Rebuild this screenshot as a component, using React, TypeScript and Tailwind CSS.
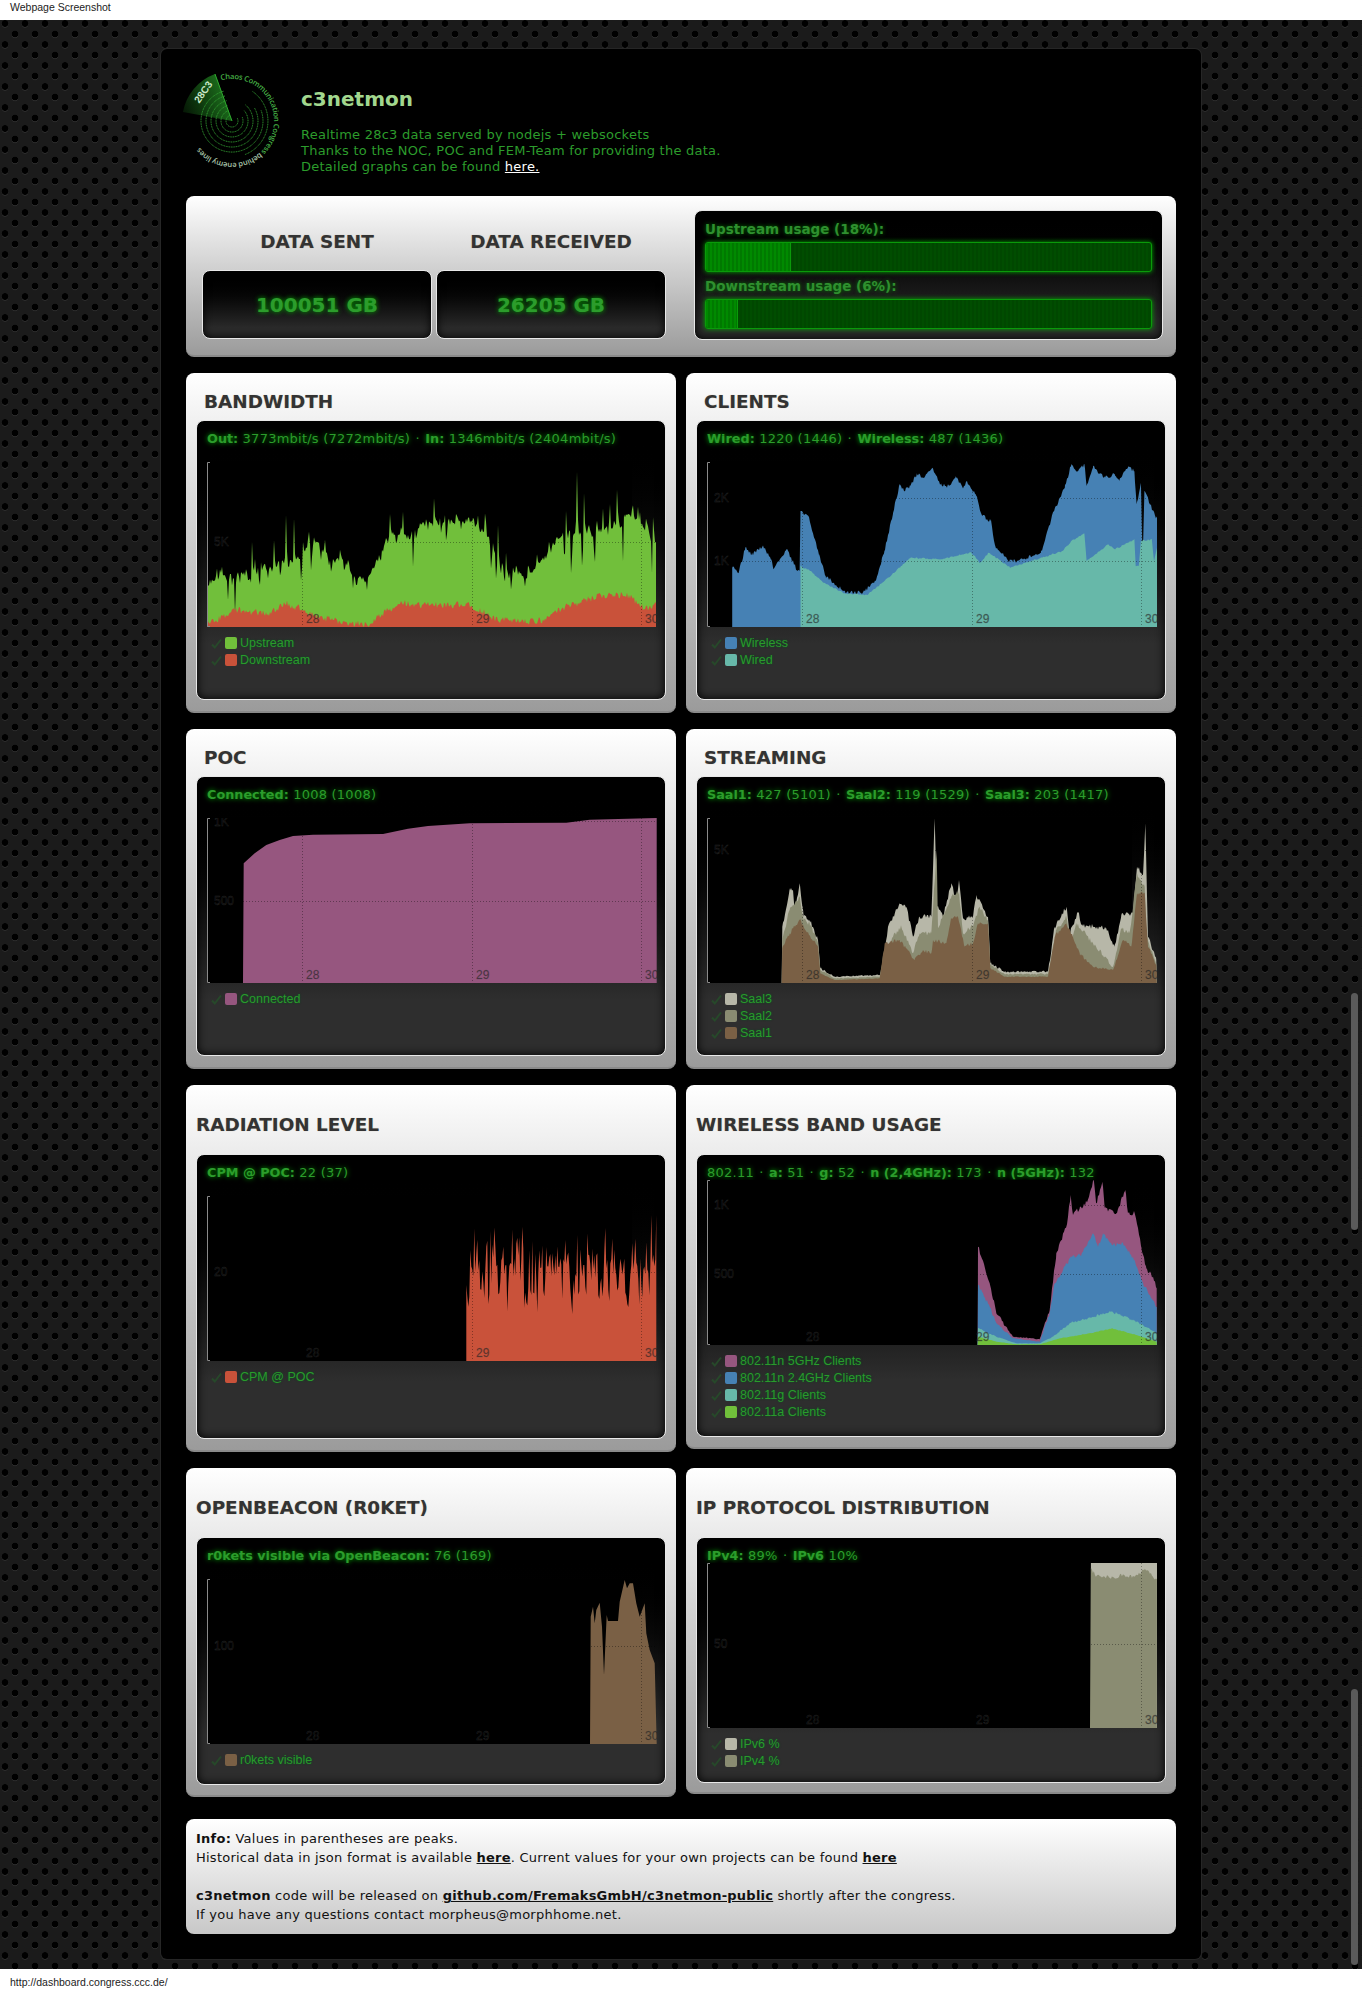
import React from "react";

type Pt = number[];
type Series = { color: string; pts: Pt[] };
type ChartProps = {
  series: Series[];
  yLabels: { text: string; y: number }[];
};

const W = 450;
const H = 165;

// maps coordinates read off the reference crops onto chart pixels
const trace = (pts: Pt[], x0: number, y0: number, sx = 3, sy = 3): Pt[] =>
  pts.map(([x, y]) => [(x - x0) / sx, (y - y0) / sy]);

const lerp = (env: Pt[], x: number) => {
  if (x <= env[0][0]) return env[0][1];
  for (let i = 1; i < env.length; i++) {
    if (x <= env[i][0]) {
      const [x1, y1] = env[i - 1];
      const [x2, y2] = env[i];
      return y1 + ((y2 - y1) * (x - x1)) / (x2 - x1 || 1);
    }
  }
  return env[env.length - 1][1];
};

const rng = (seed: number) => () => {
  seed = (seed * 16807) % 2147483647;
  return seed / 2147483647;
};

const spiky = (
  env: Pt[],
  ups: Pt[],
  downs: Pt[],
  noise: number,
  seed: number,
  hw = 1.6
): Pt[] => {
  const r = rng(seed);
  const out: Pt[] = [];
  const start = env[0][0];
  const end = env[env.length - 1][0];
  for (let x = start; x <= end; x += 1) {
    let y = lerp(env, x) + (r() - 0.5) * noise;
    ups.forEach(([sx, sy]) => {
      const d = Math.abs(x - sx);
      if (d < hw && sy < y) y = Math.min(y, sy + ((y - sy) * d) / hw);
    });
    downs.forEach(([sx, sy]) => {
      const d = Math.abs(x - sx);
      if (d < hw && sy > y) y = Math.max(y, sy - ((sy - y) * d) / hw);
    });
    out.push([x, y]);
  }
  return out;
};

// keeps the traced corners, adds jitter between them
const roughen = (pts: Pt[], noise: number, seed: number): Pt[] => {
  const r = rng(seed);
  const out: Pt[] = [];
  for (let i = 0; i < pts.length - 1; i++) {
    const [x1, y1] = pts[i];
    const [x2, y2] = pts[i + 1];
    out.push(pts[i]);
    for (let x = Math.floor(x1) + 1; x < x2; x += 1) {
      const low = Math.min(1, (H - (y1 + ((y2 - y1) * (x - x1)) / (x2 - x1))) / 30);
      out.push([x, y1 + ((y2 - y1) * (x - x1)) / (x2 - x1) + (r() - 0.5) * noise * low]);
    }
  }
  out.push(pts[pts.length - 1]);
  return out;
};

const GREEN = "#71bf3b";
const RED = "#c9523a";
const BLUE = "#4681b4";
const TEAL = "#67b8a9";
const PURPLE = "#96567f";
const BROWN = "#7a6045";
const OLIVE = "#8a8c72";
const STONE = "#b7b7a8";

/* ---------- chart data ---------- */

const bandwidthEnv = trace(
  [[112, 670], [200, 640], [300, 620], [390, 590], [430, 530], [480, 600], [520, 600], [560, 655], [600, 650], [640, 570], [660, 510], [720, 540], [760, 480], [820, 490], [900, 480], [940, 515], [1000, 620], [1070, 650], [1130, 590], [1180, 520], [1300, 510], [1380, 460], [1461, 545]],
  112,
  306
);

// short filler spikes between the tall ones traced by hand
const fillerSpikes = (env: Pt[], seed: number, every: number, reach: number) => {
  const r = rng(seed);
  const ups: Pt[] = [];
  const downs: Pt[] = [];
  for (let x = 1; x < W; x += every) {
    const y = lerp(env, x);
    if (r() > 0.5) ups.push([x + r(), y - r() * reach]);
    else downs.push([x + r(), y + r() * reach]);
  }
  return { ups, downs };
};

const bandwidthFill = fillerSpikes(bandwidthEnv, 19, 4, 14);

const bandwidthUp = spiky(
  bandwidthEnv,
  [
    ...trace(
      [[157, 620], [247, 545], [258, 545], [313, 540], [349, 465], [373, 475], [400, 545], [660, 445], [680, 450], [700, 455], [793, 415], [813, 425], [910, 430], [923, 425], [947, 435], [985, 495], [1007, 515], [1187, 365], [1222, 335], [1243, 400], [1300, 445], [1320, 405], [1342, 360], [1362, 420], [1388, 305], [1405, 440], [1430, 460], [1450, 415]],
      112,
      306
    ),
    ...bandwidthFill.ups,
  ],
  [
    ...trace(
      [[175, 720], [196, 760], [243, 690], [270, 700], [332, 665], [395, 690], [425, 665], [485, 650], [550, 685], [592, 690], [680, 570], [730, 620], [830, 560], [965, 650], [980, 680], [1005, 710], [1025, 710], [1185, 650], [1205, 690], [1238, 655], [1275, 640], [1360, 605], [1447, 640]],
      112,
      306
    ),
    ...bandwidthFill.downs,
  ],
  6,
  11,
  1.2
);

const bandwidthDown = spiky(
  trace(
    [[112, 795], [150, 775], [200, 750], [300, 760], [350, 730], [390, 745], [410, 760], [470, 775], [550, 790], [600, 790], [650, 755], [690, 725], [740, 735], [760, 735], [900, 735], [930, 750], [980, 780], [1060, 785], [1120, 780], [1150, 755], [1220, 730], [1300, 705], [1380, 705], [1420, 745], [1461, 735]],
    112,
    306
  ),
  [],
  [],
  7,
  23
);

const clientsWireless = roughen(
  trace(
    [[120, 1320], [120, 1150], [135, 1165], [150, 1090], [165, 1110], [190, 1085], [210, 1125], [215, 1155], [245, 1095], [270, 1160], [275, 1160], [277, 980], [295, 995], [320, 1110], [335, 1175], [380, 1225], [420, 1225], [450, 1190], [470, 1100], [490, 985], [505, 900], [515, 920], [530, 905], [545, 870], [560, 880], [580, 850], [600, 900], [615, 905], [635, 880], [650, 910], [660, 890], [680, 930], [695, 995], [715, 1010], [725, 1085], [755, 1130], [775, 1130], [830, 1105], [860, 980], [885, 910], [900, 840], [915, 860], [930, 840], [935, 905], [950, 845], [975, 880], [1000, 870], [1010, 890], [1030, 850], [1045, 860], [1050, 960], [1060, 895], [1064, 1140], [1068, 920], [1095, 1000], [1097, 1000]],
    62,
    833,
    2.3
  ),
  4,
  31
);

const clientsWired = roughen(
  trace(
    [[277, 1320], [277, 1145], [300, 1160], [330, 1195], [380, 1228], [430, 1232], [470, 1190], [530, 1120], [600, 1125], [670, 1105], [690, 1135], [710, 1105], [760, 1150], [880, 1100], [900, 1070], [930, 1048], [935, 1130], [985, 1080], [1000, 1095], [1045, 1065], [1048, 1145], [1055, 1145], [1060, 1070], [1085, 1065], [1090, 1130], [1097, 1090]],
    62,
    833,
    2.3
  ),
  1.5,
  37
);

const pocConnected = trace(
  [[220, 788], [222, 430], [255, 400], [290, 375], [330, 360], [370, 348], [430, 344], [640, 342], [715, 326], [775, 318], [900, 310], [1190, 308], [1260, 299], [1461, 294]],
  112,
  294
);

const saal3 = roughen(
  trace(
    [[306, 788], [308, 620], [330, 505], [340, 510], [345, 580], [360, 490], [372, 590], [390, 600], [415, 660], [422, 745], [465, 770], [600, 765], [610, 740], [625, 620], [660, 550], [680, 560], [700, 650], [720, 590], [755, 590], [765, 295], [772, 560], [790, 590], [815, 490], [830, 540], [838, 480], [850, 595], [880, 590], [890, 525], [925, 590], [932, 730], [975, 755], [1105, 755], [1125, 620], [1160, 560], [1170, 640], [1195, 575], [1205, 615], [1280, 625], [1305, 680], [1325, 585], [1360, 580], [1372, 440], [1390, 465], [1397, 310], [1405, 650], [1430, 720], [1431, 788]],
    82,
    294
  ),
  5,
  41
);

const saal2 = roughen(
  trace(
    [[306, 788], [308, 655], [330, 570], [360, 530], [372, 600], [390, 610], [415, 670], [422, 750], [465, 775], [600, 770], [612, 700], [640, 650], [665, 620], [700, 700], [720, 640], [755, 640], [771, 390], [775, 625], [815, 530], [838, 515], [850, 640], [880, 620], [900, 560], [925, 600], [932, 735], [975, 762], [1105, 762], [1130, 630], [1160, 590], [1175, 670], [1190, 610], [1240, 670], [1300, 740], [1325, 625], [1350, 640], [1372, 460], [1395, 500], [1400, 650], [1430, 730], [1431, 788]],
    82,
    294
  ),
  5,
  43
);

const saal1 = roughen(
  trace(
    [[306, 788], [308, 685], [330, 640], [360, 600], [372, 620], [415, 680], [422, 760], [465, 780], [600, 775], [615, 670], [660, 660], [705, 720], [730, 690], [755, 700], [760, 660], [800, 670], [815, 595], [835, 590], [855, 680], [880, 670], [895, 610], [925, 610], [932, 745], [975, 770], [1105, 770], [1125, 650], [1160, 610], [1200, 700], [1240, 740], [1300, 750], [1330, 660], [1355, 680], [1372, 520], [1395, 520], [1405, 680], [1430, 735], [1431, 788]],
    82,
    294
  ),
  4,
  47
);

const radiationSpikes = () => {
  const r = rng(77);
  const ups: Pt[] = [];
  const downs: Pt[] = [];
  for (let x = 892; x < 1461; x += 5) {
    if (r() > 0.35) ups.push([x + r() * 3, 430 + r() * 130]);
    else downs.push([x + r() * 3, 640 + r() * 70]);
  }
  ups.push([1063, 355], [1445, 405], [1460, 405]);
  return { ups, downs };
};

const { ups: radUps, downs: radDowns } = radiationSpikes();

const radiation = [
  [(890 - 112) / 3, H],
  ...spiky(
    trace([[890, 625], [1100, 615], [1300, 605], [1461, 620]], 112, 348),
    trace(radUps, 112, 348),
    trace(radDowns, 112, 348),
    16,
    5,
    1.1
  ),
];

const wireless5 = roughen(
  trace(
    [[894, 795], [895, 500], [930, 610], [950, 700], [1000, 770], [1080, 778], [1110, 690], [1130, 520], [1160, 440], [1173, 345], [1180, 405], [1200, 385], [1215, 375], [1228, 350], [1242, 300], [1250, 370], [1268, 305], [1275, 385], [1310, 400], [1337, 330], [1345, 400], [1365, 400], [1385, 500], [1400, 565], [1420, 590], [1431, 625], [1431, 795]],
    82,
    300
  ),
  5,
  51
);
const wireless24 = roughen(
  trace(
    [[894, 795], [895, 615], [930, 680], [950, 730], [1000, 775], [1080, 785], [1110, 700], [1125, 610], [1175, 530], [1205, 525], [1240, 460], [1255, 500], [1270, 460], [1300, 495], [1330, 490], [1365, 540], [1390, 610], [1431, 680], [1431, 795]],
    82,
    300
  ),
  4,
  53
);
const wirelessG = roughen(
  trace(
    [[894, 795], [895, 745], [950, 770], [1010, 790], [1080, 790], [1120, 770], [1170, 730], [1240, 710], [1298, 695], [1370, 725], [1431, 760], [1431, 795]],
    82,
    300
  ),
  3,
  57
);
const wirelessA = roughen(
  trace(
    [[894, 795], [895, 770], [950, 785], [1010, 793], [1080, 793], [1140, 775], [1230, 760], [1298, 745], [1370, 765], [1431, 785], [1431, 795]],
    82,
    300
  ),
  2,
  59
);

const beacon = trace(
  [[1261, 851], [1263, 470], [1270, 440], [1275, 490], [1280, 450], [1290, 428], [1297, 500], [1303, 645], [1311, 465], [1315, 483], [1345, 483], [1350, 425], [1365, 360], [1372, 385], [1380, 370], [1390, 370], [1400, 430], [1410, 470], [1425, 430], [1430, 520], [1440, 570], [1455, 610], [1461, 851]],
  112,
  357
);

const ipv6 = trace([[945, 793], [945, 305], [1097, 305], [1097, 793]], 62, 305, 2.3);
const ipv4 = [
  [(943 - 62) / 2.3, H],
  ...spiky(
    trace([[945, 325], [960, 345], [1000, 350], [1015, 340], [1040, 345], [1070, 325], [1097, 355]], 62, 305, 2.3),
    [],
    [],
    4,
    9
  ),
];

/* ---------- shared pieces ---------- */

const toPath = (pts: Pt[]) => {
  const body = pts.map(([x, y]) => `L${x.toFixed(1)} ${y.toFixed(1)}`).join(" ");
  const first = pts[0][0].toFixed(1);
  const last = pts[pts.length - 1][0].toFixed(1);
  return `M${first} ${H} ${body} L${last} ${H} Z`;
};

const DAYS = [
  { text: "28", line: 95, x: 99 },
  { text: "29", line: 265, x: 269 },
  { text: "30", line: 434, x: 438 },
];

function Chart({ series, yLabels }: ChartProps) {
  const labelProps = {
    fill: "#000",
    fillOpacity: 0.5,
    stroke: "#4a4a4a",
    strokeOpacity: 0.55,
    strokeWidth: 0.4,
    fontSize: 12,
    fontFamily: "'Liberation Sans', sans-serif",
  };
  return (
    <svg width={W} height={H} viewBox={`0 0 ${W} ${H}`} className="block ml-[10px]">
      <rect x="0" y="0" width="425" height={H} fill="#000" />
      {series.map((s) => (
        <path key={s.color} d={toPath(s.pts)} fill={s.color} />
      ))}
      {DAYS.map((d) => (
        <line key={d.line} x1={d.line + 0.5} x2={d.line + 0.5} y1="0" y2={H} stroke="#000" strokeOpacity="0.35" strokeDasharray="1 2" />
      ))}
      {yLabels.map((l) => (
        <line key={l.text} x1="0" x2={W} y1={l.y + 0.5} y2={l.y + 0.5} stroke="#000" strokeOpacity="0.35" strokeDasharray="1 2" />
      ))}
      <path d="M3 0.5H0.5V164.5H3" fill="none" stroke="#8a8a8a" />
      {DAYS.map((d) => (
        <text key={d.text} x={d.x} y="161" {...labelProps}>
          {d.text}
        </text>
      ))}
      {yLabels.map((l) => (
        <text key={l.text} x="7" y={Math.max(l.y + 4, 8)} {...labelProps}>
          {l.text}
        </text>
      ))}
    </svg>
  );
}

function Legend({ items }: { items: { color: string; label: string }[] }) {
  return (
    <div className="pt-[8px] pl-[14px] font-['Liberation_Sans',sans-serif] text-[12.5px] text-[#2b9a2b]">
      {items.map((item) => (
        <div key={item.label} className="flex h-[17px] items-center">
          <svg width="11" height="11" viewBox="0 0 11 11" className="mr-[3px]">
            <path d="M1 6.5 L3.8 9.5 L10 1.5" fill="none" stroke="#27482a" strokeWidth="2" />
          </svg>
          <span className="h-[12px] w-[12px] rounded-[2px] -mt-[2px]" style={{ backgroundColor: item.color }} />
          <span className="ml-[3px] leading-[17px] [text-shadow:0_0_2px_#052]">{item.label}</span>
        </div>
      ))}
    </div>
  );
}

function Readout({ parts, tall }: { parts: [string, string][]; tall: boolean }) {
  return (
    <div className={`${tall ? "h-[41px]" : "h-[25px]"} pt-[9px] pl-[10px] text-[13px] tracking-[0.24px] leading-[18px] whitespace-nowrap text-[#2c9c2c] [text-shadow:0_0_5px_#0a0]`}>
      {parts.map(([label, value], i) => (
        <span key={label + value}>
          {i > 0 && <span className="mx-[1px]"> · </span>}
          {label && <b className="text-[12.8px] font-bold tracking-normal">{label}</b>} {value}
        </span>
      ))}
    </div>
  );
}

type CardProps = {
  title: string;
  big?: boolean;
  tall?: boolean;
  cardH: string;
  innerH: string;
  parts: [string, string][];
  chart: ChartProps;
  legend: { color: string; label: string }[];
};

function Card({ title, big, tall = true, cardH, innerH, parts, chart, legend }: CardProps) {
  return (
    <section className={`${cardH} w-[490px] rounded-lg border-b-2 border-[#8a8a8a] bg-gradient-to-b from-white to-[#9b9b9b]`}>
      <h2 className={`${big ? "h-[69px] pl-[10px]" : "h-[47px] pl-[18px]"} flex items-center pt-[10px] text-[18.4px] font-bold text-[#333] [text-shadow:0_0_1px_rgba(120,90,40,0.4)]`}>
        {title}
      </h2>
      <div className={`${innerH} mx-[10px] rounded-lg border border-[#e8e8e8] bg-gradient-to-b from-black from-[5%] to-[#2e2e2e] to-[80%] shadow-[inset_0_0_10px_#000]`}>
        <Readout parts={parts} tall={tall} />
        <Chart {...chart} />
        <Legend items={legend} />
      </div>
    </section>
  );
}

function Logo() {
  const arc = (r: number, a0: number, a1: number) => {
    const p = (a: number) => [55 + r * Math.sin((a * Math.PI) / 180), 55 - r * Math.cos((a * Math.PI) / 180)];
    const [x0, y0] = p(a0);
    const [x1, y1] = p(a1);
    return `M${x0.toFixed(1)} ${y0.toFixed(1)} A${r} ${r} 0 ${a1 - a0 > 180 ? 1 : 0} 1 ${x1.toFixed(1)} ${y1.toFixed(1)}`;
  };
  const rings: [number, number, number][] = [
    [6, 60, 340],
    [11, 70, 340],
    [16, 50, 345],
    [21, 40, 345],
    [26, 60, 345],
    [31, 70, 345],
    [36, 35, 160],
  ];
  return (
    <svg width="110" height="110" viewBox="0 0 110 110" className="shrink-0">
      <defs>
        <linearGradient id="sweep" x1="1" y1="0.3" x2="0" y2="0.7">
          <stop offset="0" stopColor="#1f7a1f" />
          <stop offset="1" stopColor="#061a06" />
        </linearGradient>
        <path id="ring" d="M44 14.4 A42 42 0 1 1 23 82" />
      </defs>
      <path d="M55 55 L38 8 A50 50 0 0 0 6 46 Z" fill="url(#sweep)" />
      <path d="M55 55 L38 8" stroke="#2fae2f" strokeWidth="1" />
      {rings.map(([r, a0, a1]) => (
        <path key={r} d={arc(r, a0, a1)} fill="none" stroke="#35a535" strokeWidth="1" strokeDasharray="1 0.7" />
      ))}
      <text x="29" y="28" transform="rotate(-55 29 28)" fontSize="10" fontWeight="bold" fill="#c8e8c8" fontFamily="'Liberation Sans', sans-serif" textAnchor="middle">
        28C3
      </text>
      <text fontSize="7.5" fontFamily="'Open Sans', sans-serif" fontWeight="600" fill="#45b045">
        <textPath href="#ring" textLength="180">
          Chaos Communication Congress <tspan fill="#a9c4a9">behind enemy lines</tspan>
        </textPath>
      </text>
    </svg>
  );
}

function UsageBar({ label, pct }: { label: string; pct: string }) {
  return (
    <div className="mb-[5px]">
      <div className="h-[19px] text-[13.5px] font-bold leading-[19px] text-[#2f8f2f] [text-shadow:0_0_4px_#070]">{label}</div>
      <div className="mt-[3px] h-[30px] overflow-hidden rounded-[3px] border border-[#0a9a0a] bg-[#004d00] shadow-[0_0_5px_#0a0] bg-[repeating-linear-gradient(90deg,transparent_0,transparent_2px,rgba(0,0,0,0.08)_2px,rgba(0,0,0,0.08)_4px)]">
        <div className="h-full border-r border-[#0a9a0a] bg-[#008a00] bg-[repeating-linear-gradient(90deg,transparent_0,transparent_2px,rgba(0,0,0,0.12)_2px,rgba(0,0,0,0.12)_4px)]" style={{ width: pct }} />
      </div>
    </div>
  );
}

function Total({ title, value }: { title: string; value: string }) {
  return (
    <div className="w-[230px]">
      <h2 className="flex h-[74px] items-center justify-center pt-[17px] text-[18.4px] font-bold text-[#333] [text-shadow:0_0_1px_rgba(120,90,40,0.4)]">{title}</h2>
      <div className="flex h-[69px] items-center justify-center rounded-lg border border-[#e8e8e8] bg-gradient-to-b from-black to-[#2a2a2a] to-[85%] text-[20px] font-bold text-[#2c9c2c] shadow-[inset_0_0_8px_#000] [text-shadow:0_0_5px_#0a0]">
        {value}
      </div>
    </div>
  );
}

const row1 = "flex gap-[10px]";

export default function App() {
  return (
    <div className="relative flex h-[1989px] w-[1362px] flex-col overflow-hidden bg-white font-['DejaVu_Sans',sans-serif]">
      <div className="h-[20px] pl-[10px] pt-[1px] font-['Liberation_Sans',sans-serif] text-[10.5px] leading-[12px] text-[#222]">Webpage Screenshot</div>

      <div className="h-[1949px] pl-[161px] pt-[29px] bg-[#1b1b1b] bg-[radial-gradient(circle_at_5px_3.5px,#000_3px,transparent_3.6px),radial-gradient(circle_at_15px_14px,#000_3px,transparent_3.6px),radial-gradient(circle_at_5px_4.5px,#2c2c2c_3px,transparent_3.6px),radial-gradient(circle_at_15px_15px,#2c2c2c_3px,transparent_3.6px)] bg-[length:20px_21px]">
        <main className="h-[1910px] w-[1040px] rounded-md bg-black shadow-[0_0_0_1px_#262626]">
          <header className="flex h-[147px] pl-[16px] pt-[17px]">
            <Logo />
            <div className="ml-[14px] pt-[20px]">
              <h1 className="h-[26px] text-[20px] font-bold leading-[26px] text-[#a2d78e]">c3netmon</h1>
              <div className="mt-[15px] text-[13px] tracking-[0.24px] leading-[16px] text-[#2c9c2c]">
                <p>Realtime 28c3 data served by nodejs + websockets</p>
                <p>Thanks to the NOC, POC and FEM-Team for providing the data.</p>
                <p>
                  Detailed graphs can be found <a className="text-white underline">here.</a>
                </p>
              </div>
            </div>
          </header>

          <div className="px-[25px]">
            <section className="flex h-[161px] rounded-lg border-b-2 border-[#8a8a8a] bg-gradient-to-b from-white to-[#9b9b9b] pl-[16px]">
              <div className="flex gap-[4px]">
                <Total title="DATA SENT" value="100051 GB" />
                <Total title="DATA RECEIVED" value="26205 GB" />
              </div>
              <div className="ml-[28px] mt-[14px] h-[130px] w-[469px] rounded-lg border border-[#e8e8e8] bg-gradient-to-b from-black to-[#2a2a2a] to-[85%] px-[10px] pt-[9px] shadow-[inset_0_0_8px_#000]">
                <UsageBar label="Upstream usage (18%):" pct="19.2%" />
                <UsageBar label="Downstream usage (6%):" pct="7.3%" />
              </div>
            </section>

            <div className={`${row1} mt-[16px]`}>
              <Card
                title="BANDWIDTH"
                cardH="h-[340px]"
                innerH="h-[280px]"
                parts={[["Out:", "3773mbit/s (7272mbit/s)"], ["In:", "1346mbit/s (2404mbit/s)"]]}
                chart={{
                  series: [{ color: GREEN, pts: bandwidthUp }, { color: RED, pts: bandwidthDown }],
                  yLabels: [{ text: "5K", y: 80 }],
                }}
                legend={[{ color: GREEN, label: "Upstream" }, { color: RED, label: "Downstream" }]}
              />
              <Card
                title="CLIENTS"
                cardH="h-[340px]"
                innerH="h-[280px]"
                parts={[["Wired:", "1220 (1446)"], ["Wireless:", "487 (1436)"]]}
                chart={{
                  series: [{ color: BLUE, pts: clientsWireless }, { color: TEAL, pts: clientsWired }],
                  yLabels: [{ text: "2K", y: 36 }, { text: "1K", y: 99 }],
                }}
                legend={[{ color: BLUE, label: "Wireless" }, { color: TEAL, label: "Wired" }]}
              />
            </div>

            <div className={`${row1} mt-[16px]`}>
              <Card
                title="POC"
                cardH="h-[340px]"
                innerH="h-[280px]"
                parts={[["Connected:", "1008 (1008)"]]}
                chart={{
                  series: [{ color: PURPLE, pts: pocConnected }],
                  yLabels: [{ text: "1K", y: 3 }, { text: "500", y: 83 }],
                }}
                legend={[{ color: PURPLE, label: "Connected" }]}
              />
              <Card
                title="STREAMING"
                cardH="h-[340px]"
                innerH="h-[280px]"
                parts={[["Saal1:", "427 (5101)"], ["Saal2:", "119 (1529)"], ["Saal3:", "203 (1417)"]]}
                chart={{
                  series: [{ color: STONE, pts: saal3 }, { color: OLIVE, pts: saal2 }, { color: BROWN, pts: saal1 }],
                  yLabels: [{ text: "5K", y: 32 }],
                }}
                legend={[{ color: STONE, label: "Saal3" }, { color: OLIVE, label: "Saal2" }, { color: BROWN, label: "Saal1" }]}
              />
            </div>

            <div className={`${row1} mt-[16px] items-start`}>
              <Card
                title="RADIATION LEVEL"
                big
                cardH="h-[367px]"
                innerH="h-[285px]"
                parts={[["CPM @ POC:", "22 (37)"]]}
                chart={{
                  series: [{ color: RED, pts: radiation }],
                  yLabels: [{ text: "20", y: 76 }],
                }}
                legend={[{ color: RED, label: "CPM @ POC" }]}
              />
              <Card
                title="WIRELESS BAND USAGE"
                big
                tall={false}
                cardH="h-[364px]"
                innerH="h-[283px]"
                parts={[["", "802.11"], ["a:", "51"], ["g:", "52"], ["n (2,4GHz):", "173"], ["n (5GHz):", "132"]]}
                chart={{
                  series: [{ color: PURPLE, pts: wireless5 }, { color: BLUE, pts: wireless24 }, { color: TEAL, pts: wirelessG }, { color: GREEN, pts: wirelessA }],
                  yLabels: [{ text: "1K", y: 25 }, { text: "500", y: 94 }],
                }}
                legend={[{ color: PURPLE, label: "802.11n 5GHz Clients" }, { color: BLUE, label: "802.11n 2.4GHz Clients" }, { color: TEAL, label: "802.11g Clients" }, { color: GREEN, label: "802.11a Clients" }]}
              />
            </div>

            <div className={`${row1} mt-[16px] items-start`}>
              <Card
                title="OPENBEACON (R0KET)"
                big
                cardH="h-[329px]"
                innerH="h-[248px]"
                parts={[["r0kets visible via OpenBeacon:", "76 (169)"]]}
                chart={{
                  series: [{ color: BROWN, pts: beacon }],
                  yLabels: [{ text: "100", y: 67 }],
                }}
                legend={[{ color: BROWN, label: "r0kets visible" }]}
              />
              <Card
                title="IP PROTOCOL DISTRIBUTION"
                big
                tall={false}
                cardH="h-[326px]"
                innerH="h-[246px]"
                parts={[["IPv4:", "89%"], ["IPv6", "10%"]]}
                chart={{
                  series: [{ color: STONE, pts: ipv6 }, { color: OLIVE, pts: ipv4 }],
                  yLabels: [{ text: "50", y: 81 }],
                }}
                legend={[{ color: STONE, label: "IPv6 %" }, { color: OLIVE, label: "IPv4 %" }]}
              />
            </div>

            <section className="mt-[22px] h-[115px] rounded-lg bg-gradient-to-b from-white to-[#c8c8c8] pl-[10px] pt-[10px] text-[13px] tracking-[0.24px] leading-[19px] text-[#111]">
              <p>
                <b>Info:</b> Values in parentheses are peaks.
              </p>
              <p>
                Historical data in json format is available <a className="font-bold underline">here</a>. Current values for your own projects can be found <a className="font-bold underline">here</a>
              </p>
              <p className="mt-[19px]">
                <b>c3netmon</b> code will be released on <a className="font-bold underline">github.com/FremaksGmbH/c3netmon-public</a> shortly after the congress.
              </p>
              <p>If you have any questions contact morpheus@morphhome.net.</p>
            </section>
          </div>
        </main>
      </div>

      <div className="pl-[10px] pt-[7px] font-['Liberation_Sans',sans-serif] text-[10.5px] leading-[12px] text-[#222]">http://dashboard.congress.ccc.de/</div>

      <div className="absolute left-[1351px] top-[993px] h-[237px] w-[7px] rounded-[4px] bg-[#5a5a5a]" />
      <div className="absolute left-[1351px] top-[1689px] h-[276px] w-[7px] rounded-[4px] bg-[#5a5a5a]" />
    </div>
  );
}
